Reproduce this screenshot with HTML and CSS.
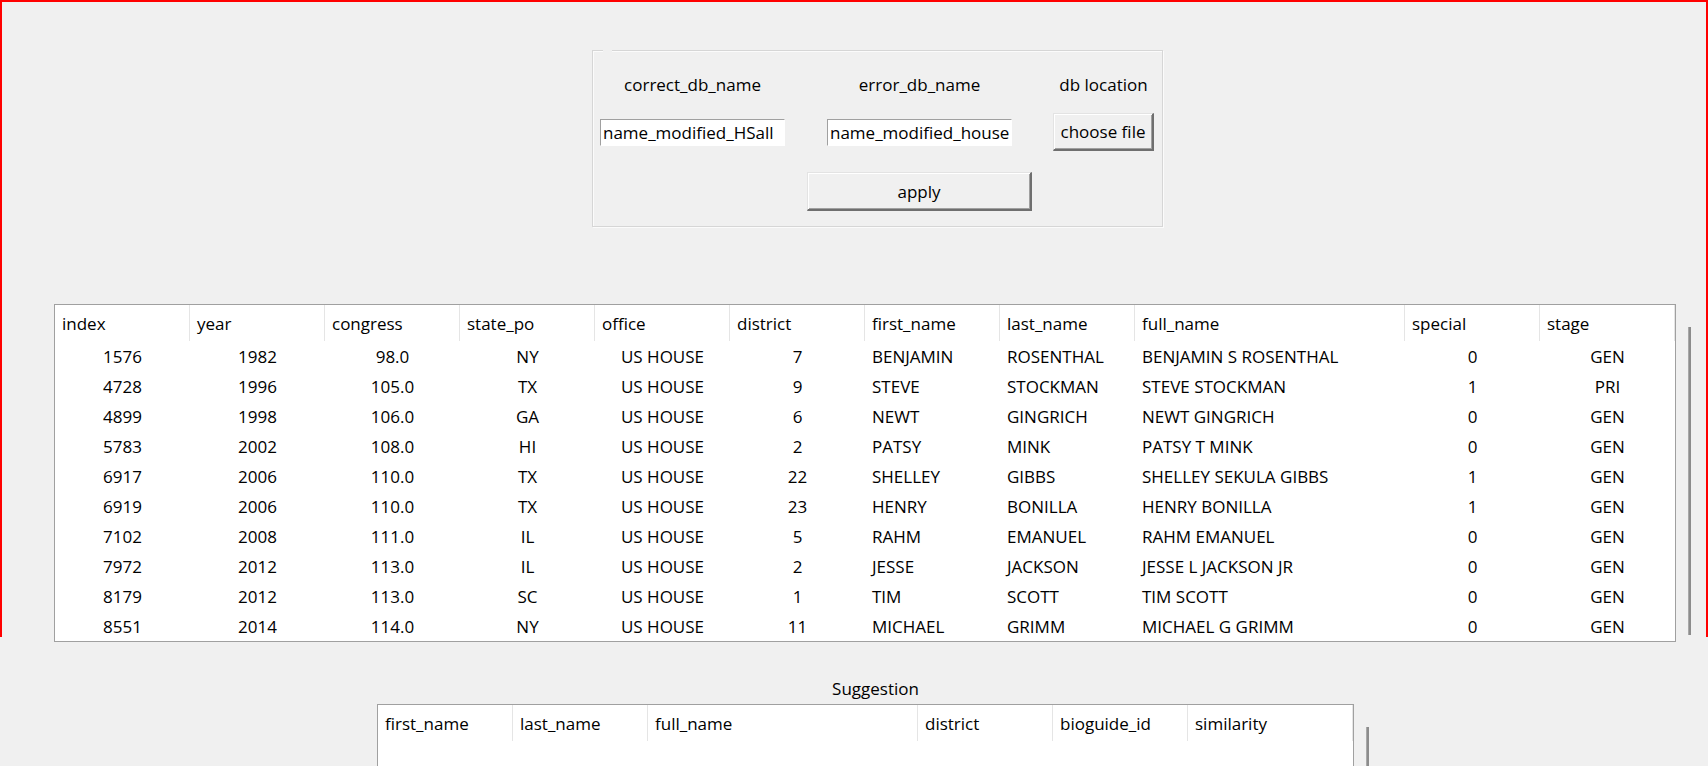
FILE: index.html
```html
<!DOCTYPE html>
<html lang="en">
<head>
<meta charset="utf-8">
<title>db name matcher</title>
<link rel="stylesheet" href="styles.css">
</head>
<body>
<div class="app">
  <div class="config">
    <span class="config-gap"></span>
    <div class="config-grid">
      <div class="lbl">correct_db_name</div>
      <div class="lbl">error_db_name</div>
      <div class="lbl">db location</div>
      <input class="entry" type="text" value="name_modified_HSall">
      <input class="entry" type="text" value="name_modified_house">
      <button class="btn btn-file" type="button">choose file</button>
      <button class="btn btn-apply" type="button">apply</button>
    </div>
  </div>

  <div class="table-row main-row">
    <div class="tbox main-table">
      <div class="trow thead">
        <div class="th">index</div><div class="th">year</div><div class="th">congress</div><div class="th">state_po</div><div class="th">office</div><div class="th">district</div><div class="th">first_name</div><div class="th">last_name</div><div class="th">full_name</div><div class="th">special</div><div class="th">stage</div>
      </div>
      <div class="trow"><div class="td c">1576</div><div class="td c">1982</div><div class="td c">98.0</div><div class="td c">NY</div><div class="td c">US HOUSE</div><div class="td c">7</div><div class="td">BENJAMIN</div><div class="td">ROSENTHAL</div><div class="td">BENJAMIN S ROSENTHAL</div><div class="td c">0</div><div class="td c">GEN</div></div>
      <div class="trow"><div class="td c">4728</div><div class="td c">1996</div><div class="td c">105.0</div><div class="td c">TX</div><div class="td c">US HOUSE</div><div class="td c">9</div><div class="td">STEVE</div><div class="td">STOCKMAN</div><div class="td">STEVE STOCKMAN</div><div class="td c">1</div><div class="td c">PRI</div></div>
      <div class="trow"><div class="td c">4899</div><div class="td c">1998</div><div class="td c">106.0</div><div class="td c">GA</div><div class="td c">US HOUSE</div><div class="td c">6</div><div class="td">NEWT</div><div class="td">GINGRICH</div><div class="td">NEWT GINGRICH</div><div class="td c">0</div><div class="td c">GEN</div></div>
      <div class="trow"><div class="td c">5783</div><div class="td c">2002</div><div class="td c">108.0</div><div class="td c">HI</div><div class="td c">US HOUSE</div><div class="td c">2</div><div class="td">PATSY</div><div class="td">MINK</div><div class="td">PATSY T MINK</div><div class="td c">0</div><div class="td c">GEN</div></div>
      <div class="trow"><div class="td c">6917</div><div class="td c">2006</div><div class="td c">110.0</div><div class="td c">TX</div><div class="td c">US HOUSE</div><div class="td c">22</div><div class="td">SHELLEY</div><div class="td">GIBBS</div><div class="td">SHELLEY SEKULA GIBBS</div><div class="td c">1</div><div class="td c">GEN</div></div>
      <div class="trow"><div class="td c">6919</div><div class="td c">2006</div><div class="td c">110.0</div><div class="td c">TX</div><div class="td c">US HOUSE</div><div class="td c">23</div><div class="td">HENRY</div><div class="td">BONILLA</div><div class="td">HENRY BONILLA</div><div class="td c">1</div><div class="td c">GEN</div></div>
      <div class="trow"><div class="td c">7102</div><div class="td c">2008</div><div class="td c">111.0</div><div class="td c">IL</div><div class="td c">US HOUSE</div><div class="td c">5</div><div class="td">RAHM</div><div class="td">EMANUEL</div><div class="td">RAHM EMANUEL</div><div class="td c">0</div><div class="td c">GEN</div></div>
      <div class="trow"><div class="td c">7972</div><div class="td c">2012</div><div class="td c">113.0</div><div class="td c">IL</div><div class="td c">US HOUSE</div><div class="td c">2</div><div class="td">JESSE</div><div class="td">JACKSON</div><div class="td">JESSE L JACKSON JR</div><div class="td c">0</div><div class="td c">GEN</div></div>
      <div class="trow"><div class="td c">8179</div><div class="td c">2012</div><div class="td c">113.0</div><div class="td c">SC</div><div class="td c">US HOUSE</div><div class="td c">1</div><div class="td">TIM</div><div class="td">SCOTT</div><div class="td">TIM SCOTT</div><div class="td c">0</div><div class="td c">GEN</div></div>
      <div class="trow"><div class="td c">8551</div><div class="td c">2014</div><div class="td c">114.0</div><div class="td c">NY</div><div class="td c">US HOUSE</div><div class="td c">11</div><div class="td">MICHAEL</div><div class="td">GRIMM</div><div class="td">MICHAEL G GRIMM</div><div class="td c">0</div><div class="td c">GEN</div></div>
    </div>
    <div class="vscroll main-scroll"></div>
  </div>

  <div class="suggest">
    <div class="suggest-title">Suggestion</div>
    <div class="table-row">
      <div class="tbox sug-table">
        <div class="trow thead">
          <div class="th">first_name</div><div class="th">last_name</div><div class="th">full_name</div><div class="th">district</div><div class="th">bioguide_id</div><div class="th">similarity</div>
        </div>
        <div class="sug-body"></div>
      </div>
      <div class="vscroll sug-scroll"></div>
    </div>
  </div>
</div>
<div class="frame"></div>
</body>
</html>
```

FILE: styles.css
```css
html, body {
  margin: 0;
  padding: 0;
  overflow: hidden;
  height: 766px;
}

body {
  background: #f0f0f0;
  color: #000;
  font-family: "Open Sans", "Noto Sans", "DejaVu Sans", sans-serif;
  font-size: 17px;
}

.app {
  display: flex;
  flex-direction: column;
  align-items: flex-start;
}

/* ---------- config group ---------- */
.config {
  position: relative;
  margin: 50px 0 0 592px;
  width: 571px;
  box-sizing: border-box;
  border: 1px solid #d6d6d6;
  box-shadow: inset 1px 1px 0 #fbfbfb, 1px 1px 0 #fbfbfb;
  padding: 22px 0 15px;
}

.config-gap {
  position: absolute;
  top: -1px;
  left: 10px;
  width: 9px;
  height: 2px;
  background: #f0f0f0;
}

.config-grid {
  display: grid;
  grid-template-columns: 199px 255px 113px;
  grid-template-rows: 23px 38px 43px;
  row-gap: 17px;
  justify-items: center;
  align-items: center;
}

.lbl {
  line-height: 23px;
  white-space: nowrap;
}

.entry {
  width: 185px;
  height: 27px;
  box-sizing: border-box;
  margin: 0;
  padding: 0 0 0 2px;
  border: 1px solid;
  border-color: #a0a0a0 #ffffff #ffffff #a0a0a0;
  background: #fff;
  font: inherit;
  color: #000;
  outline: none;
}

.btn {
  box-sizing: border-box;
  margin: 0;
  padding: 0;
  background: #f0f0f0;
  font: inherit;
  color: #000;
  border-style: solid;
  border-width: 1px 2px 2px 1px;
  border-color: #e3e3e3 #6f6f6f #6f6f6f #e3e3e3;
  box-shadow: inset 1px 1px 0 #ffffff, inset -1px -1px 0 #a0a0a0;
}

.btn-file {
  width: 101px;
  height: 38px;
}

.btn-apply {
  grid-column: 2;
  align-self: end;
  width: 225px;
  height: 39px;
}

/* ---------- tables ---------- */
.table-row {
  display: flex;
  align-items: flex-start;
}

.main-row {
  margin: 77px 0 0 54px;
}

.tbox {
  background: #fff;
  border: 1px solid #a0a0a0;
}

.trow {
  display: grid;
  height: 30px;
  align-items: center;
}

.main-table .trow {
  grid-template-columns: repeat(8, 135px) 270px 135px 135px;
}

.sug-table .trow {
  grid-template-columns: 135px 135px 270px 135px 135px 165px;
}

.trow.thead {
  height: 36px;
  align-items: stretch;
}

.th {
  display: flex;
  align-items: center;
  padding: 0 7px;
  white-space: nowrap;
  box-shadow: inset -1px 0 0 #e5e5e5;
}

.td {
  padding: 0 7px;
  white-space: nowrap;
  overflow: hidden;
}

.td.c {
  text-align: center;
}

.vscroll {
  width: 3px;
  margin-left: 12px;
  margin-top: 23px;
  background: #8c8c8c;
  box-shadow: inset 1px 0 0 #a8a8a8;
}

.main-scroll {
  height: 308px;
}

.suggest {
  margin: 35px 0 0 377px;
}

.suggest-title {
  width: 977px;
  box-sizing: border-box;
  padding-left: 20px;
  text-align: center;
  line-height: 23px;
  margin-bottom: 4px;
}

.sug-body {
  height: 200px;
}

.sug-scroll {
  height: 200px;
}

/* ---------- screenshot frame ---------- */
.frame {
  position: absolute;
  top: 0;
  left: 0;
  width: 1708px;
  height: 637px;
  box-sizing: border-box;
  border: 2px solid #ff0000;
  border-bottom: 0;
  pointer-events: none;
}
```
